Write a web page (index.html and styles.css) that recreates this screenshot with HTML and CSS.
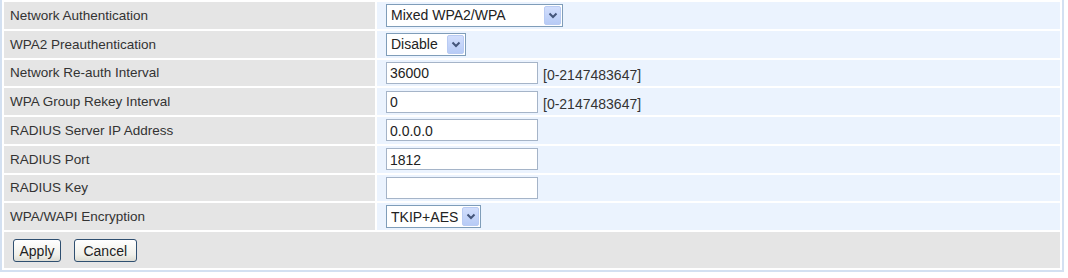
FILE: index.html
```html
<!DOCTYPE html>
<html lang="en">
<head>
    <meta charset="UTF-8">
    <title>Wireless Security</title>
    <link rel="stylesheet" href="styles.css">
</head>
<body>
    <div class="panel">
        <table class="form">
            <tr>
                <td class="label">Network Authentication</td>
                <td class="field">
                    <span class="select-wrap auth">
                        <select><option>Mixed WPA2/WPA</option></select>
                        <span class="arrow"><svg width="10" height="7" viewBox="0 0 10 7"><path d="M1.5 1.5 L5 5 L8.5 1.5" fill="none" stroke="#44557a" stroke-width="2"/></svg></span>
                    </span>
                </td>
            </tr>
            <tr>
                <td class="label">WPA2 Preauthentication</td>
                <td class="field">
                    <span class="select-wrap preauth">
                        <select><option>Disable</option></select>
                        <span class="arrow"><svg width="10" height="7" viewBox="0 0 10 7"><path d="M1.5 1.5 L5 5 L8.5 1.5" fill="none" stroke="#44557a" stroke-width="2"/></svg></span>
                    </span>
                </td>
            </tr>
            <tr>
                <td class="label">Network Re-auth Interval</td>
                <td class="field"><input type="text" value="36000"><span class="hint">[0-2147483647]</span></td>
            </tr>
            <tr>
                <td class="label">WPA Group Rekey Interval</td>
                <td class="field"><input type="text" value="0"><span class="hint">[0-2147483647]</span></td>
            </tr>
            <tr>
                <td class="label">RADIUS Server IP Address</td>
                <td class="field"><input type="text" value="0.0.0.0"></td>
            </tr>
            <tr>
                <td class="label">RADIUS Port</td>
                <td class="field"><input type="text" value="1812"></td>
            </tr>
            <tr>
                <td class="label">RADIUS Key</td>
                <td class="field"><input type="password" value=""></td>
            </tr>
            <tr>
                <td class="label">WPA/WAPI Encryption</td>
                <td class="field">
                    <span class="select-wrap cipher">
                        <select><option>TKIP+AES</option></select>
                        <span class="arrow"><svg width="10" height="7" viewBox="0 0 10 7"><path d="M1.5 1.5 L5 5 L8.5 1.5" fill="none" stroke="#44557a" stroke-width="2"/></svg></span>
                    </span>
                </td>
            </tr>
            <tr class="actions">
                <td colspan="2">
                    <button class="btn apply">Apply</button>
                    <button class="btn cancel">Cancel</button>
                </td>
            </tr>
        </table>
    </div>
</body>
</html>
```

FILE: styles.css
```css
body {
    margin: 0;
    font-family: "Liberation Sans", Arial, sans-serif;
    font-size: 13.5px;
    color: #333;
    background-color: #fff;
}

.panel {
    width: 1060px;
    border: 2px solid #d3e0f1;
    border-top: none;
}

.form {
    width: 100%;
    border-spacing: 2px;
}

.form td {
    height: 26.75px;
    padding: 0;
    vertical-align: middle;
}

.label {
    width: 365px;
    padding-left: 6px !important;
    background-color: #e5e5e5;
}

.field {
    padding-left: 9px !important;
    background-color: #ebf3fe;
}

input[type="text"],
input[type="password"] {
    box-sizing: border-box;
    width: 152px;
    height: 22px;
    margin: 0;
    padding: 1px 3px 0;
    border: 1px solid #a5b4c8;
    font-family: "Liberation Sans", Arial, sans-serif;
    font-size: 14px;
    color: #222;
    vertical-align: middle;
}

.hint {
    margin-left: 5px;
    font-size: 14px;
    vertical-align: middle;
    position: relative;
    top: 2px;
}

.select-wrap {
    position: relative;
    display: inline-block;
    vertical-align: middle;
}

.select-wrap select {
    box-sizing: border-box;
    appearance: none;
    -webkit-appearance: none;
    height: 23px;
    margin: 0;
    padding: 0 0 0 4px;
    border: 1px solid #7f9db9;
    border-radius: 0;
    background-color: #fff;
    font-family: "Liberation Sans", Arial, sans-serif;
    font-size: 14px;
    color: #222;
    display: block;
}

.auth select { width: 177px; }
.preauth select { width: 80px; }
.cipher select { width: 95px; }

.select-wrap .arrow {
    position: absolute;
    top: 2px;
    right: 2px;
    width: 17px;
    height: 19px;
    box-sizing: border-box;
    border: 1px solid #b9cbf3;
    border-radius: 2px;
    background: linear-gradient(#d2defc, #b7cbf6);
    display: flex;
    align-items: center;
    justify-content: center;
    pointer-events: none;
}

.actions td {
    height: 36px;
    padding: 0 0 0 9px;
    background-color: #e5e5e5;
}

.btn {
    box-sizing: border-box;
    height: 23px;
    margin: 1px 5px 0 0;
    padding: 0;
    border: 1px solid #2f4f70;
    border-radius: 3px;
    background: linear-gradient(#ffffff, #f0f0ea 70%, #dcdcd4);
    font-family: "Liberation Sans", Arial, sans-serif;
    font-size: 14px;
    color: #222;
    vertical-align: middle;
}

.apply { width: 48px; }
.cancel { width: 63px; margin-left: 4px; }
```
